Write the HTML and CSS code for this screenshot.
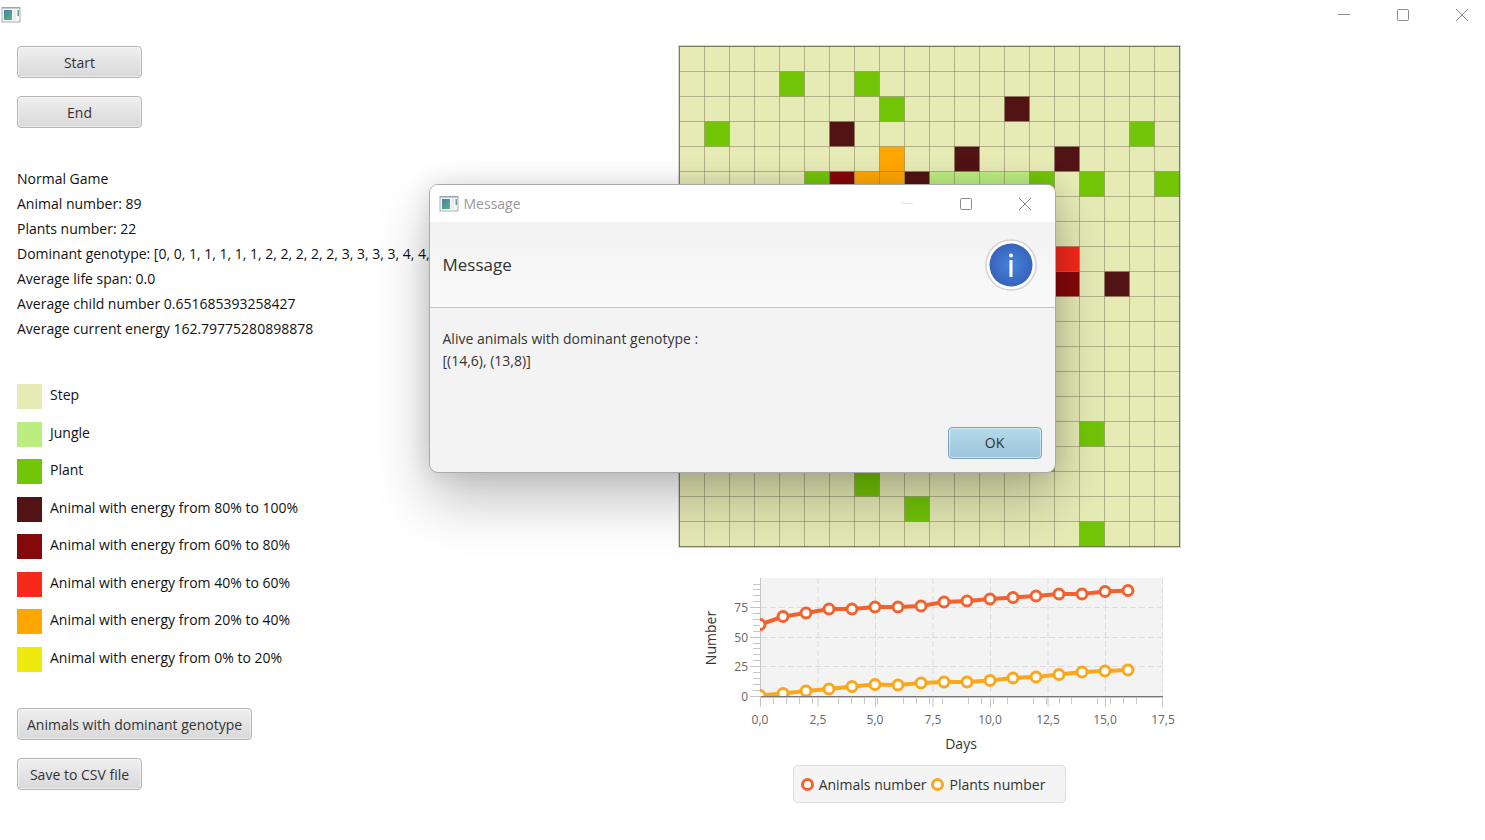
FILE: index.html
```html
<!DOCTYPE html>
<html lang="en">
<head>
<meta charset="utf-8">
<title>Evolution simulation</title>
<link rel="stylesheet" href="styles.css">
</head>
<body>
<svg class="defs" aria-hidden="true">
  <defs>
    <linearGradient id="pane" x1="0" y1="0" x2="1" y2="1">
      <stop offset="0" stop-color="#4a7fae"/><stop offset="1" stop-color="#58b37c"/>
    </linearGradient>
    <symbol id="app-icon" viewBox="0 0 20 16">
      <rect x="1" y="0.5" width="18" height="14.5" fill="#f7f8f9" stroke="#a9adb5"/>
      <path d="M1 1h18" stroke="#8f9fb0"/>
      <rect x="3" y="3" width="8" height="10" fill="url(#pane)"/>
      <rect x="12" y="3" width="3" height="10" fill="#e9ebed"/>
      <rect x="16.500" y="3" width="1.500" height="6" fill="#55a58d"/>
    </symbol>
    <symbol id="minimize" viewBox="0 0 14 14"><path d="M1 6.5h12" stroke="currentColor"/></symbol>
    <symbol id="maximize" viewBox="0 0 14 14"><rect x="1.5" y="1.5" width="11" height="11" rx="1" fill="none" stroke="currentColor"/></symbol>
    <symbol id="close" viewBox="0 0 14 14"><path d="M1 1l12 12M13 1L1 13" stroke="currentColor"/></symbol>
  </defs>
</svg>

<header class="titlebar">
  <svg class="app-icon"><use href="#app-icon"/></svg>
  <div class="window-controls">
    <button aria-label="Minimize"><svg><use href="#minimize"/></svg></button>
    <button aria-label="Maximize"><svg><use href="#maximize"/></svg></button>
    <button aria-label="Close"><svg><use href="#close"/></svg></button>
  </div>
</header>

<main class="layout">
  <section class="side">
    <div class="actions">
      <button class="btn">Start</button>
      <button class="btn">End</button>
    </div>
    <div class="stats">
      <p>Normal Game</p>
      <p>Animal number: 89</p>
      <p>Plants number: 22</p>
      <p>Dominant genotype: [0, 0, 1, 1, 1, 1, 1, 2, 2, 2, 2, 2, 3, 3, 3, 3, 4, 4,</p>
      <p>Average life span: 0.0</p>
      <p>Average child number 0.651685393258427</p>
      <p>Average current energy 162.79775280898878</p>
    </div>
    <ul class="legend">
      <li><span class="swatch step"></span>Step</li>
      <li><span class="swatch jungle"></span>Jungle</li>
      <li><span class="swatch plant"></span>Plant</li>
      <li><span class="swatch e100"></span>Animal with energy from 80% to 100%</li>
      <li><span class="swatch e80"></span>Animal with energy from 60% to 80%</li>
      <li><span class="swatch e60"></span>Animal with energy from 40% to 60%</li>
      <li><span class="swatch e40"></span>Animal with energy from 20% to 40%</li>
      <li><span class="swatch e20"></span>Animal with energy from 0% to 20%</li>
    </ul>
    <div class="actions">
      <button class="btn">Animals with dominant genotype</button>
      <button class="btn">Save to CSV file</button>
    </div>
  </section>

  <section class="world">
    <svg class="board" viewBox="0 0 503 503" role="img" aria-label="World map">
      <defs>
        <pattern id="grid" width="25" height="25" patternUnits="userSpaceOnUse" x="1" y="1">
          <path d="M0 0.5h25M0.5 0v25" class="grid-line"/>
        </pattern>
      </defs>
      <rect x="0.5" y="0.5" width="502" height="502" class="board-halo"/>
      <rect x="1" y="1" width="501" height="501" class="step"/>
      <g transform="translate(1.5 1.5) scale(25)">
        <path class="jungle" d="M10 5h4v5h-4z"/>
        <path class="plant" d="M4 1h1v1h-1zM7 1h1v1h-1zM8 2h1v1h-1zM1 3h1v1h-1zM18 3h1v1h-1zM5 5h1v1h-1zM14 5h1v1h-1zM16 5h1v1h-1zM19 5h1v1h-1zM16 15h1v1h-1zM14 16h1v1h-1zM7 17h1v1h-1zM9 18h1v1h-1zM16 19h1v1h-1z"/>
        <path class="e100" d="M13 2h1v1h-1zM6 3h1v1h-1zM11 4h1v1h-1zM15 4h1v1h-1zM9 5h1v1h-1zM17 9h1v1h-1z"/>
        <path class="e80" d="M6 5h1v1h-1zM15 9h1v1h-1z"/>
        <path class="e60" d="M15 8h1v1h-1z"/>
        <path class="e40" d="M8 4h1v1h-1zM7 5h2v1h-2z"/>
      </g>
      <rect x="1" y="1" width="501" height="501" fill="url(#grid)"/>
      <rect x="1.5" y="1.5" width="500" height="500" class="board-edge"/>
    </svg>

    <svg class="chart" viewBox="678 572 503 184" role="img" aria-label="Animals and plants per day">
      <defs><clipPath id="plot"><rect x="760" y="578" width="403" height="118"/></clipPath></defs>
      <rect x="760" y="578" width="403" height="118" class="plot"/>
      <path class="guides" d="M818 578v118M875.5 578v118M933 578v118M990.5 578v118M1048 578v118M1105.5 578v118M1162.5 578v118M761 607.5h402M761 637.5h402M761 666.5h402"/>
      <path class="minor" d="M753 690.5h7M753 684.5h7M753 678.5h7M753 672.5h7M753 660.5h7M753 654.5h7M753 648.5h7M753 643.5h7M753 631.5h7M753 625.5h7M753 619.5h7M753 613.5h7M753 601.5h7M753 595.5h7M753 589.5h7M753 584.5h7"/>
      <path class="minor" d="M773.5 697v7M786.5 697v7M799.5 697v7M812.5 697v7M838.5 697v7M851.5 697v7M864.5 697v7M877.5 697v7M903.5 697v7M916.5 697v7M929.5 697v7M942.5 697v7M968.5 697v7M981.5 697v7M993.5 697v7M1007.5 697v7M1033.5 697v7M1046.5 697v7M1059.5 697v7M1071.5 697v7M1097.5 697v7M1110.5 697v7M1123.5 697v7M1136.5 697v7"/>
      <path class="major" d="M760.5 578v129M750 607.5h10M750 637.5h10M750 666.5h10M750 696.5h10M818 697v10M875.5 697v10M933 697v10M990.5 697v10M1048 697v10M1105.5 697v10M1162.5 697v10"/>
      <path class="major" d="M760 697.5h403"/>
      <path class="zero" d="M761 696.5h402"/>
      <g clip-path="url(#plot)">
        <g class="animals">
          <polyline points="760,624.5 783,616.5 806,613 829,609 852,609 875,607 898,607 921,606 944,602 967,601 990,599 1013,597.5 1036,596 1059,594 1082,594 1105,591.5 1128,590.5"/>
          <circle cx="760" cy="624.5" r="5"/><circle cx="783" cy="616.5" r="5"/><circle cx="806" cy="613" r="5"/><circle cx="829" cy="609" r="5"/><circle cx="852" cy="609" r="5"/><circle cx="875" cy="607" r="5"/><circle cx="898" cy="607" r="5"/><circle cx="921" cy="606" r="5"/><circle cx="944" cy="602" r="5"/><circle cx="967" cy="601" r="5"/><circle cx="990" cy="599" r="5"/><circle cx="1013" cy="597.5" r="5"/><circle cx="1036" cy="596" r="5"/><circle cx="1059" cy="594" r="5"/><circle cx="1082" cy="594" r="5"/><circle cx="1105" cy="591.5" r="5"/><circle cx="1128" cy="590.5" r="5"/>
        </g>
        <g class="plants">
          <polyline points="760,695.5 783,693.5 806,691 829,689 852,686.5 875,684.5 898,685 921,683 944,682 967,682 990,680.5 1013,678 1036,677 1059,674.5 1082,672 1105,671 1128,670"/>
          <circle cx="760" cy="695.5" r="5"/><circle cx="783" cy="693.5" r="5"/><circle cx="806" cy="691" r="5"/><circle cx="829" cy="689" r="5"/><circle cx="852" cy="686.5" r="5"/><circle cx="875" cy="684.5" r="5"/><circle cx="898" cy="685" r="5"/><circle cx="921" cy="683" r="5"/><circle cx="944" cy="682" r="5"/><circle cx="967" cy="682" r="5"/><circle cx="990" cy="680.5" r="5"/><circle cx="1013" cy="678" r="5"/><circle cx="1036" cy="677" r="5"/><circle cx="1059" cy="674.5" r="5"/><circle cx="1082" cy="672" r="5"/><circle cx="1105" cy="671" r="5"/><circle cx="1128" cy="670" r="5"/>
        </g>
      </g>
      <g class="ticks-y"><text x="748" y="612">75</text><text x="748" y="642">50</text><text x="748" y="671">25</text><text x="748" y="701">0</text></g>
      <g class="ticks-x"><text x="760" y="724">0,0</text><text x="818" y="724">2,5</text><text x="875" y="724">5,0</text><text x="933" y="724">7,5</text><text x="990" y="724">10,0</text><text x="1048" y="724">12,5</text><text x="1105" y="724">15,0</text><text x="1163" y="724">17,5</text></g>
      <text class="axis" x="961" y="749">Days</text>
      <text class="axis" transform="translate(716 638) rotate(-90)">Number</text>
    </svg>
    <div class="chart-legend">
      <span class="key"><i class="dot dot-animals"></i>Animals number</span>
      <span class="key"><i class="dot dot-plants"></i>Plants number</span>
    </div>
  </section>
</main>

<div class="dialog" role="dialog" aria-labelledby="dialog-title">
  <div class="dialog-bar">
    <svg class="app-icon"><use href="#app-icon"/></svg>
    <span id="dialog-title">Message</span>
    <div class="window-controls">
      <button class="disabled" aria-label="Minimize" disabled><svg><use href="#minimize"/></svg></button>
      <button aria-label="Maximize"><svg><use href="#maximize"/></svg></button>
      <button aria-label="Close"><svg><use href="#close"/></svg></button>
    </div>
  </div>
  <div class="dialog-header">
    <h1>Message</h1>
    <svg class="info" viewBox="0 0 52 52" aria-hidden="true">
      <defs><radialGradient id="blue"><stop offset="0" stop-color="#4684da"/><stop offset="1" stop-color="#3763bd"/></radialGradient></defs>
      <circle cx="26" cy="26" r="25" fill="#fff" stroke="#d2d2d2" stroke-width="1.5"/>
      <circle cx="26" cy="26" r="21.5" fill="url(#blue)"/>
      <rect x="24.5" y="21" width="3" height="17" fill="#fff"/>
      <circle cx="26" cy="16.500" r="2" fill="#fff"/>
    </svg>
  </div>
  <div class="dialog-body">
    <p>Alive animals with dominant genotype :<br>[(14,6), (13,8)]</p>
    <button class="btn primary">OK</button>
  </div>
</div>
</body>
</html>
```
FILE: styles.css
```css
* { box-sizing: border-box; }
body {
  margin: 0;
  background: #fff;
  color: #111;
  font: 14px/25px "Open Sans", "Noto Sans", sans-serif;
  position: relative;
  overflow-x: hidden;
}
p, h1, ul { margin: 0; padding: 0; }
.defs { position: absolute; width: 0; height: 0; }

.titlebar { display: flex; align-items: center; height: 30px; padding-left: 1px; }
.app-icon { width: 20px; height: 16px; }
.window-controls { display: flex; margin-left: auto; padding-right: 16px; gap: 45px; color: #8a8a8a; }
.window-controls button { display: flex; padding: 0; border: 0; background: none; color: inherit; }
.window-controls svg { width: 14px; height: 14px; }
.window-controls .disabled { color: #e2e2e2; }

.layout { display: grid; grid-template-columns: 661px 503px; padding: 15px 17px; }
.side { display: flex; flex-direction: column; min-width: 0; padding-top: 1px; }
.actions { display: flex; flex-direction: column; align-items: flex-start; gap: 18px; }
.btn {
  min-width: 125px;
  height: 32px;
  padding: 0 9px;
  border: 1px solid #b4b4b4;
  border-radius: 4px;
  background: linear-gradient(#efefef, #d9d9d9);
  box-shadow: inset 0 0 0 1px rgba(255, 255, 255, .45);
  color: #333;
  font: inherit;
  white-space: nowrap;
}
.stats { margin: 38px 0 41px; white-space: nowrap; }
.legend { display: grid; grid-auto-rows: 1fr; height: 300px; margin-bottom: 26px; list-style: none; }
.legend li { display: flex; align-items: flex-start; gap: 8px; line-height: 26px; }
.swatch { width: 25px; height: 25px; margin-top: 2px; }

.step { background: #e6eab5; fill: #e6eab5; }
.jungle { background: #bbed80; fill: #bbed80; }
.plant { background: #72c507; fill: #72c507; }
.e100 { background: #521315; fill: #521315; }
.e80 { background: #85080a; fill: #85080a; }
.e60 { background: #f6291b; fill: #f6291b; }
.e40 { background: #ffa600; fill: #ffa600; }
.e20 { background: #eee90e; fill: #eee90e; }

.world { display: flex; flex-direction: column; align-items: center; }
.board, .chart { display: block; width: 100%; }
.grid-line { stroke: rgba(125, 120, 90, .5); }
.board-halo { fill: none; stroke: #d5d5d5; }
.board-edge { fill: none; stroke: rgba(70, 70, 50, .5); }

.chart { margin-top: 24px; }
.plot { fill: #f3f3f3; }
.guides { fill: none; stroke: #dcdcdc; stroke-dasharray: 6 3; }
.minor, .major { stroke: #c6c6c6; }
.zero { stroke: #777; }
.animals, .plants { fill: none; stroke-width: 4; }
.animals { stroke: #f3622d; }
.plants { stroke: #fba71b; }
.chart circle { fill: #fff; stroke-width: 3; }
.ticks-x, .ticks-y { font-size: 12px; fill: #666; }
.ticks-x, .axis { text-anchor: middle; }
.ticks-y { text-anchor: end; }
.axis { fill: #333; }

.chart-legend {
  display: flex;
  gap: 5px;
  height: 38px;
  padding: 0 20px 0 7px;
  margin-top: 9px;
  border: 1px solid #dedede;
  border-radius: 5px;
  background: #f4f4f4;
  color: #333;
}
.key { display: flex; align-items: center; gap: 5px; }
.dot { width: 13px; height: 13px; border: 3px solid; border-radius: 50%; background: #fff; }
.dot-animals { border-color: #f3622d; }
.dot-plants { border-color: #fba71b; }

.dialog {
  position: absolute;
  top: 184px;
  left: 50%;
  width: 627px;
  margin-left: -314px;
  border: 1px solid #aaa;
  border-radius: 9px;
  overflow: hidden;
  background: #f3f3f3;
  color: #333;
  box-shadow: 0 28px 56px rgba(0, 0, 0, .24), 0 0 24px rgba(0, 0, 0, .12);
}
.dialog-bar { display: flex; align-items: center; gap: 5px; height: 37px; padding-left: 9px; background: #fff; color: #999; }
.dialog-bar .window-controls { padding-right: 23px; }
.dialog-header {
  display: flex;
  align-items: center;
  justify-content: space-between;
  height: 86px;
  padding: 0 18px 0 13px;
  border-bottom: 1px solid #c4c4c4;
  background: linear-gradient(#f2f2f2, #fafafa);
}
.dialog-header h1 { font-size: 17px; font-weight: 400; }
.info { width: 52px; height: 52px; }
.dialog-body { display: flex; flex-direction: column; padding: 20px 13px 13px; line-height: 22px; }
.primary {
  align-self: flex-end;
  width: 94px;
  min-width: 0;
  margin-top: 55px;
  border-color: #7fa3b5;
  background: linear-gradient(#b3daeb, #9dc5da);
}
```
